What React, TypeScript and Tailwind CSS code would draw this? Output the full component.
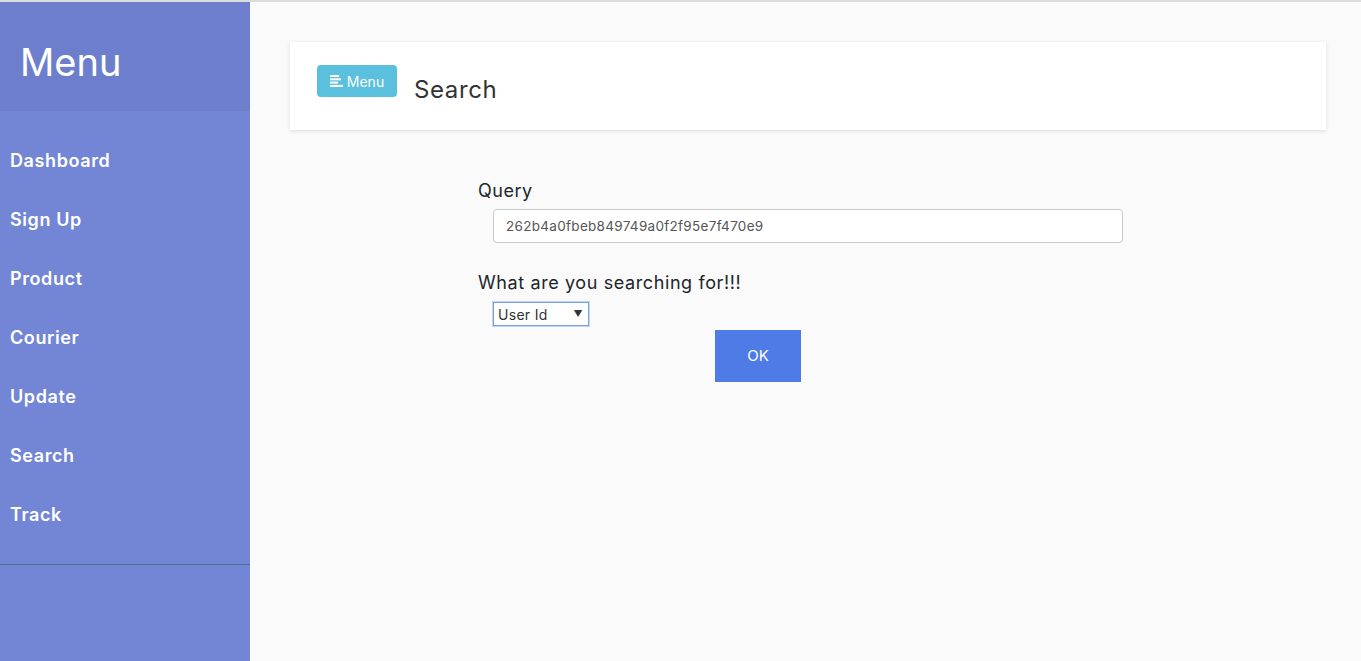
import React from 'react';

const links = ['Dashboard', 'Sign Up', 'Product', 'Courier', 'Update', 'Search', 'Track'];

const AlignLeftIcon: React.FC = () => (
  <svg width="13" height="12" viewBox="0 0 13 12" fill="white" className="mr-[4px]">
    <rect x="0" y="0" width="9" height="2" />
    <rect x="0" y="3.3" width="11" height="2" />
    <rect x="0" y="6.6" width="8" height="2" />
    <rect x="0" y="9.9" width="13" height="2" />
  </svg>
);

const Sidebar: React.FC = () => (
  <nav className="w-[250px] shrink-0 bg-[#7386d5] text-white">
    <div className="h-[109px] bg-[#6d7fcc] pl-[20px] pt-[37px]">
      <h3 className="text-[38px] leading-[46px] font-normal">Menu</h3>
    </div>
    <ul className="py-[20px] border-b border-[#47748b]">
      {links.map((label) => (
        <li key={label}>
          <a
            href="#"
            className="flex h-[59px] items-center px-[10px] text-[18px] font-semibold tracking-[0.6px]"
          >
            {label}
          </a>
        </li>
      ))}
    </ul>
  </nav>
);

const SearchForm: React.FC = () => (
  <form className="pl-[188px] pt-[47px]" onSubmit={(e) => e.preventDefault()}>
    <label className="block text-[18px] leading-[28px] tracking-[0.5px] text-[#212529]">Query</label>
    <input
      type="text"
      defaultValue="262b4a0fbeb849749a0f2f95e7f470e9"
      className="ml-[15px] mt-[4px] h-[34px] w-[630px] rounded-[4px] border border-[#c8c8c8] bg-white px-[12px] text-[13.5px] tracking-[0.3px] text-[#555]"
    />
    <label className="mt-[26px] block text-[18px] leading-[28px] tracking-[0.6px] text-[#212529]">
      What are you searching for!!!
    </label>
    <div className="ml-[15px] mt-[5px] flex h-[24px] w-[96px] items-center justify-between border border-[#7b9fe3] bg-white pl-[4px] pr-[5px] text-[14px] tracking-[0.3px] text-[#333] ring-1 ring-[#c3d4f5]">
      <span>User Id</span>
      <span className="text-[9px]">▼</span>
    </div>
    <button
      type="submit"
      className="mt-[4px] ml-[237px] h-[52px] w-[86px] bg-[#4e7be6] text-[15px] text-white"
    >
      OK
    </button>
  </form>
);

const App: React.FC = () => (
  <div className="flex min-h-[661px] border-t-2 border-[#dcdcdc] bg-[#fafafa] font-['Inter',sans-serif]">
    <Sidebar />
    <main className="flex-1 pl-[40px] pr-[35px] pt-[40px]">
      <div className="flex h-[88px] items-start bg-white px-[27px] pt-[23px] shadow-[0_1px_4px_rgba(0,0,0,0.12)]">
        <button
          type="button"
          className="flex h-[32px] w-[80px] items-center justify-center rounded-[4px] bg-[#5bc0de] text-[14px] text-white"
        >
          <AlignLeftIcon />
          Menu
        </button>
        <h2 className="ml-[17px] mt-[10px] text-[24px] leading-[30px] tracking-[0.6px] text-[#333]">
          Search
        </h2>
      </div>
      <SearchForm />
    </main>
  </div>
);

export default App;
